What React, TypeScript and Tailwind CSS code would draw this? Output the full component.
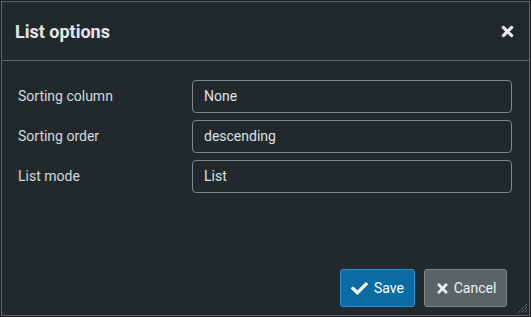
import React from "react";
import { FaCheck, FaTimes } from "react-icons/fa";

const rows = [
  { label: "Sorting column", value: "None" },
  { label: "Sorting order", value: "descending" },
  { label: "List mode", value: "List" },
];

const App = () => {
  return (
    <div
      className="w-[531px] h-[317px] bg-[#1b2023] pt-[1px] pl-[1px] overflow-hidden"
      style={{ fontFamily: "Roboto, 'Liberation Sans', sans-serif" }}
    >
      <div className="relative w-[529px] h-[315px] bg-[#22292d] border border-[#5d6569] flex flex-col">
        <div className="h-[59px] flex items-center justify-between pl-[13px] pr-[13px] border-b border-[#5d6569] shrink-0">
          <h2 className="text-[18px] font-bold text-[#e2e7ea]">List options</h2>
          <FaTimes className="text-[#e8ecee] w-[17px] h-[17px] mt-[1px]" />
        </div>
        <div className="grid grid-cols-[174px_1fr] gap-y-[7px] items-center pt-[19px] pl-[16px] pr-[17px]">
          {rows.map((row) => (
            <React.Fragment key={row.label}>
              <span className="text-[14px] text-[#d3d9dc]">{row.label}</span>
              <div className="h-[33px] rounded-[4px] border border-[#7e878b] flex items-center pl-[11px] text-[14px] text-[#dbe1e4]">
                {row.value}
              </div>
            </React.Fragment>
          ))}
        </div>
        <div className="mt-auto flex justify-end gap-[9px] pr-[22px] pb-[8px]">
          <button className="h-[38px] w-[75px] rounded-[3px] bg-[#0b6ca2] border border-[#2c93d2] text-white text-[14px] flex items-center justify-center gap-[6px]">
            <FaCheck className="w-[17px] h-[17px]" />
            Save
          </button>
          <button className="h-[38px] w-[83px] rounded-[3px] bg-[#5a6467] border border-[#7b8588] text-[#eef1f2] text-[14px] flex items-center justify-center gap-[4px]">
            <FaTimes className="w-[15px] h-[15px]" />
            Cancel
          </button>
        </div>
        <svg className="absolute right-[1px] bottom-[1px]" width="11" height="11" viewBox="0 0 11 11">
          <path d="M10 1L1 10M10 4L4 10M10 7L7 10" stroke="#8a9397" strokeWidth="1" strokeDasharray="1 1" />
        </svg>
      </div>
    </div>
  );
};

export default App;
